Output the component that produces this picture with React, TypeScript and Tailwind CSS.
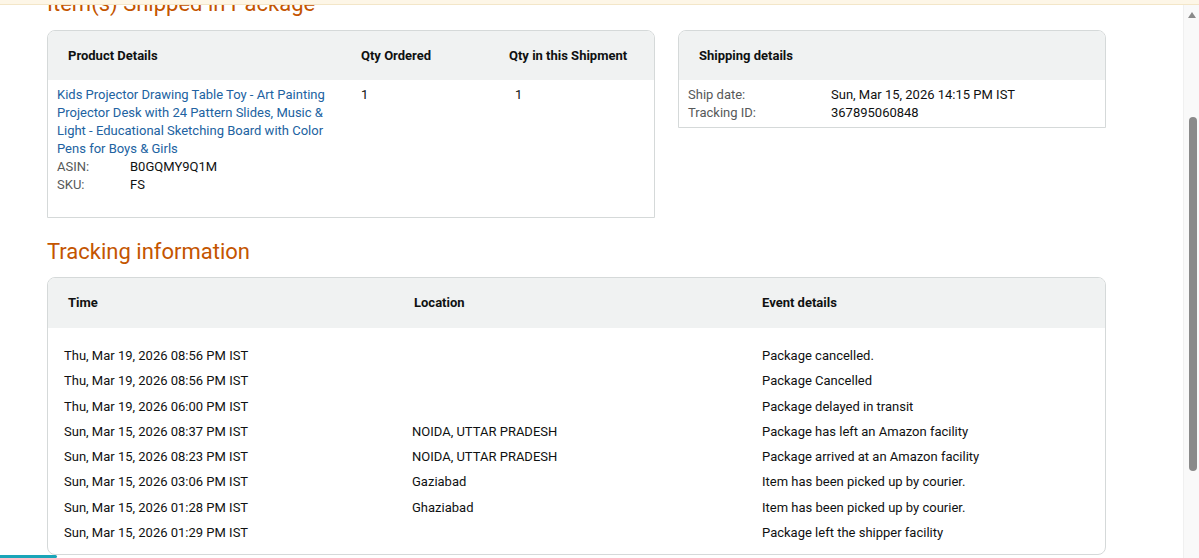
import React from 'react';

const font = { fontFamily: 'Roboto, "Liberation Sans", Arial, sans-serif' };

const events = [
  { time: 'Thu, Mar 19, 2026 08:56 PM IST', loc: '', ev: 'Package cancelled.' },
  { time: 'Thu, Mar 19, 2026 08:56 PM IST', loc: '', ev: 'Package Cancelled' },
  { time: 'Thu, Mar 19, 2026 06:00 PM IST', loc: '', ev: 'Package delayed in transit' },
  { time: 'Sun, Mar 15, 2026 08:37 PM IST', loc: 'NOIDA, UTTAR PRADESH', ev: 'Package has left an Amazon facility' },
  { time: 'Sun, Mar 15, 2026 08:23 PM IST', loc: 'NOIDA, UTTAR PRADESH', ev: 'Package arrived at an Amazon facility' },
  { time: 'Sun, Mar 15, 2026 03:06 PM IST', loc: 'Gaziabad', ev: 'Item has been picked up by courier.' },
  { time: 'Sun, Mar 15, 2026 01:28 PM IST', loc: 'Ghaziabad', ev: 'Item has been picked up by courier.' },
  { time: 'Sun, Mar 15, 2026 01:29 PM IST', loc: '', ev: 'Package left the shipper facility' },
];

export default function App() {
  return (
    <div className="relative w-[1199px] h-[558px] overflow-hidden bg-white text-[13px] text-[#0f1111]" style={font}>
      {/* sticky notice strip at top */}
      <div className="absolute top-0 left-0 right-0 h-[5px] bg-[#fdf6e7] border-b border-[#f3e6c8] z-10" />

      <div className="pl-[47px] w-[1106px]">
        <h2 className="mt-[-10px] text-[22px] leading-[28px] text-[#c45500]">Item(s) Shipped in Package</h2>

        <div className="mt-[12px] flex gap-[23px] items-start">
          {/* product card */}
          <div className="w-[608px] h-[188px] border border-[#d5d9d9] rounded-t-[8px] overflow-hidden">
            <div className="h-[49px] bg-[#f0f2f2] grid grid-cols-[293px_148px_1fr] items-center font-bold">
              <div className="pl-5">Product Details</div>
              <div className="pl-5">Qty Ordered</div>
              <div className="pl-5">Qty in this Shipment</div>
            </div>
            <div className="grid grid-cols-[293px_148px_1fr] pt-[6px] leading-[18px]">
              <div className="pl-[9px]">
                <div className="text-[#2162a1]">
                  Kids Projector Drawing Table Toy - Art Painting Projector Desk with 24 Pattern Slides, Music &amp; Light - Educational Sketching Board with Color Pens for Boys &amp; Girls
                </div>
                <div className="flex">
                  <span className="w-[73px] text-[#565959]">ASIN:</span>
                  <span>B0GQMY9Q1M</span>
                </div>
                <div className="flex">
                  <span className="w-[73px] text-[#565959]">SKU:</span>
                  <span>FS</span>
                </div>
              </div>
              <div className="pl-5">1</div>
              <div className="pl-[26px]">1</div>
            </div>
          </div>

          {/* shipping card */}
          <div className="w-[428px] border border-[#d5d9d9] rounded-t-[8px] overflow-hidden">
            <div className="h-[49px] bg-[#f0f2f2] flex items-center pl-5 font-bold">Shipping details</div>
            <div className="pt-[6px] pb-[5px] pl-[9px] leading-[18px]">
              <div className="flex">
                <span className="w-[143px] text-[#565959]">Ship date:</span>
                <span>Sun, Mar 15, 2026 14:15 PM IST</span>
              </div>
              <div className="flex">
                <span className="w-[143px] text-[#565959]">Tracking ID:</span>
                <span>367895060848</span>
              </div>
            </div>
          </div>
        </div>

        <h2 className="mt-[20px] text-[22px] leading-[28px] text-[#c45500]">Tracking information</h2>

        <div className="mt-[11px] w-[1059px] border border-[#d5d9d9] rounded-[8px] overflow-hidden">
          <div className="h-[50px] bg-[#f0f2f2] grid grid-cols-[346px_348px_1fr] items-center font-bold">
            <div className="pl-5">Time</div>
            <div className="pl-5">Location</div>
            <div className="pl-5">Event details</div>
          </div>
          <div className="pt-[15px] pb-[9px]">
            {events.map((e, i) => (
              <div key={i} className="grid grid-cols-[346px_348px_1fr] leading-[25.3px]">
                <div className="pl-[16px]">{e.time}</div>
                <div className="pl-[18px]">{e.loc}</div>
                <div className="pl-[20px]">{e.ev}</div>
              </div>
            ))}
          </div>
        </div>
      </div>

      {/* bottom-left progress line */}
      <div className="absolute left-0 bottom-0 w-[57px] h-[3px] bg-[#1aa5b8] rounded-r" />

      {/* browser scrollbar */}
      <div className="absolute top-[5px] right-0 bottom-0 w-[16px] bg-[#f9f9f9] border-l border-[#f0f0f0]">
        <svg className="absolute left-[4px] top-[7px]" width="8" height="6" viewBox="0 0 8 6">
          <path d="M4 0 L8 6 L0 6 Z" fill="#8a8a8a" />
        </svg>
        <div className="absolute left-[5px] top-[112px] w-[8px] h-[354px] rounded-full bg-[#8a8a8a]" />
      </div>
    </div>
  );
}
